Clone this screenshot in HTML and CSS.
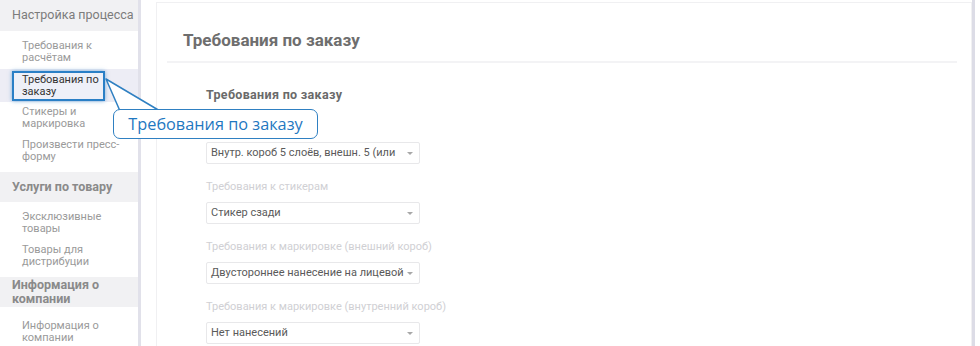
FILE: index.html
```html
<!DOCTYPE html>
<html lang="ru">
    <head>
        <title>Требования по заказу</title>
        <link rel="stylesheet" href="styles.css">
    </head>
    <body>
        <div class="layout">
            <aside class="sidebar">
                <div class="side-title">Настройка процесса</div>
                <ul class="side-list">
                    <li>Требования к<br>расчётам</li>
                    <li class="active"><div class="highlight">Требования по<br>заказу</div></li>
                    <li>Стикеры и<br>маркировка</li>
                    <li>Произвести пресс-<br>форму</li>
                </ul>
                <div class="side-title bold">Услуги по товару</div>
                <ul class="side-list">
                    <li>Эксклюзивные<br>товары</li>
                    <li>Товары для<br>дистрибуции</li>
                </ul>
                <div class="side-title bold two-line">Информация о<br>компании</div>
                <ul class="side-list last">
                    <li>Информация о<br>компании</li>
                </ul>
            </aside>

            <section class="panel">
                <div class="panel-head">
                    <h2>Требования по заказу</h2>
                </div>
                <div class="panel-body">
                    <h3>Требования по заказу</h3>

                    <div class="field">
                        <!-- label sits under the tutorial callout -->
                        <div class="field-label"></div>
                        <div class="select">Внутр. короб 5 слоёв, внешн. 5 (или</div>
                    </div>
                    <div class="field">
                        <div class="field-label">Требования к стикерам</div>
                        <div class="select">Стикер сзади</div>
                    </div>
                    <div class="field">
                        <div class="field-label">Требования к маркировке (внешний короб)</div>
                        <div class="select">Двустороннее нанесение на лицевой</div>
                    </div>
                    <div class="field">
                        <div class="field-label">Требования к маркировке (внутренний короб)</div>
                        <div class="select">Нет нанесений</div>
                    </div>
                </div>
            </section>
            <div class="scroll-edge"></div>
        </div>

        <!-- tutorial callout pointing at the selected menu item -->
        <svg class="pointer" width="70" height="40" viewBox="0 0 70 40">
            <polygon points="2,6 56,38 16,38" fill="#fff" stroke="#2f80c2" stroke-width="1.5" stroke-linejoin="round"/>
        </svg>
        <div class="callout">Требования по заказу</div>
    </body>
</html>
```

FILE: styles.css
```css
body{
    margin: 0;
    background-color: #fff;
    font-family: Roboto, "Liberation Sans", Arial, sans-serif;
    overflow: hidden;
}
.layout{
    display: flex;
    height: 346px;
    overflow: hidden;
}
.sidebar{
    width: 138px;
    flex-shrink: 0;
    border-right: 3px solid #e1e1ea;
    white-space: nowrap;
}
.side-title{
    background-color: #f1f1f3;
    color: #7c7c7c;
    font-size: 12.5px;
    line-height: 16px;
    padding: 7px 12px 8px;
}
.side-title.bold{
    font-weight: bold;
    color: #8a8a8a;
    padding: 7px 12px 7px;
}
.side-title.two-line{
    line-height: 14px;
    padding: 1px 12px 1px;
}
.side-list{
    list-style-type: none;
    margin: 0;
    padding: 5px 0 4px;
}
.side-list.last{
    padding-top: 9px;
}
.side-list li{
    font-size: 11px;
    line-height: 12px;
    color: #9a9a9a;
    padding: 4px 22px 5px;
    height: 24px;
}
.side-list li.active{
    background-color: #ededf5;
    padding: 2px 0 1px 12px;
    height: 30px;
}
.highlight{
    width: 74px;
    height: 24px;
    padding: 1px 7px 1px 8px;
    border: 2px solid #2a7fc6;
    box-shadow: 0 0 4px rgba(42,127,198,0.6);
    color: #333;
    background-color: #eef0f8;
}
.panel{
    flex: 1;
    margin: 2px 0 0 15px;
    border: 1px solid #f0f0f2;
    border-bottom: none;
}
.panel-head{
    margin: 0 14px 0 10px;
    padding: 27px 16px 11px;
    border-bottom: 2px solid #f3f3f5;
}
.panel-head h2{
    margin: 0;
    font-size: 17px;
    line-height: 20px;
    font-weight: bold;
    color: #6e6e6e;
}
.panel-body{
    padding: 24px 0 0 49px;
}
.panel-body h3{
    margin: 0 0 17px;
    font-size: 12.5px;
    line-height: 16px;
    color: #6a6a6a;
    letter-spacing: 0.02rem;
}
.field{
    margin-bottom: 16px;
}
.field-label{
    font-size: 11px;
    height: 14px;
    line-height: 14px;
    color: #d0d0d4;
    margin-bottom: 8px;
}
.select{
    position: relative;
    width: 194px;
    height: 20px;
    line-height: 20px;
    padding: 0 14px 0 4px;
    border: 1px solid #e8e8ea;
    border-radius: 2px;
    font-size: 11px;
    color: #5a5a5a;
    white-space: nowrap;
    overflow: hidden;
}
.select::after{
    content: "";
    position: absolute;
    right: 6px;
    top: 9px;
    border-left: 3px solid transparent;
    border-right: 3px solid transparent;
    border-top: 3px solid #a8a8a8;
}
.scroll-edge{
    width: 3px;
    margin-right: 5px;
    background-color: #dcdce6;
}
.pointer{
    position: absolute;
    left: 104px;
    top: 73px;
}
.callout{
    position: absolute;
    left: 113px;
    top: 109px;
    width: 203px;
    height: 28px;
    border: 1.5px solid #2f80c2;
    border-radius: 7px;
    background-color: #fff;
    color: #1f78c1;
    font-family: "Open Sans", "Noto Sans", sans-serif;
    font-size: 16.3px;
    line-height: 28px;
    text-align: center;
}
```
